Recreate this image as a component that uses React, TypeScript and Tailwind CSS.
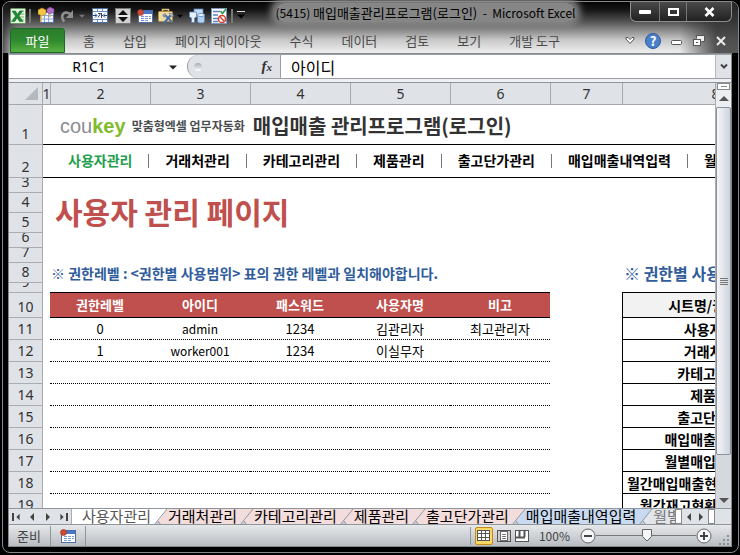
import type { ReactNode } from 'react'
import clsx from 'clsx'

const FONT = 'font-["Noto_Sans_CJK_KR","Noto_Sans",sans-serif]'
const LATIN = 'font-["Noto_Sans","Noto_Sans_CJK_KR",sans-serif]'

const RIBBON_TABS = ['홈', '삽입', '페이지 레이아웃', '수식', '데이터', '검토', '보기', '개발 도구']

const COLUMNS = [
  { label: '1', width: 'w-2' },
  { label: '2', width: 'w-[100px]' },
  { label: '3', width: 'w-[100px]' },
  { label: '4', width: 'w-[100px]' },
  { label: '5', width: 'w-[100px]' },
  { label: '6', width: 'w-[100px]' },
  { label: '7', width: 'w-[72px]' },
  { label: '8', width: 'w-[186px]' },
]

const ROWS = [
  { label: '1', height: 'h-10' },
  { label: '2', height: 'h-[33px]' },
  { label: '3', height: 'h-[15px]' },
  { label: '4', height: 'h-5' },
  { label: '5', height: 'h-5' },
  { label: '6', height: 'h-[15px]' },
  { label: '7', height: 'h-[15px]' },
  { label: '8', height: 'h-5' },
  { label: '9', height: 'h-[10px]' },
  { label: '10', height: 'h-[25px]' },
  { label: '11', height: 'h-[22px]' },
  { label: '12', height: 'h-[22px]' },
  { label: '13', height: 'h-[22px]' },
  { label: '14', height: 'h-[22px]' },
  { label: '15', height: 'h-[22px]' },
  { label: '16', height: 'h-[22px]' },
  { label: '17', height: 'h-[22px]' },
  { label: '18', height: 'h-[22px]' },
  { label: '19', height: 'h-[22px]' },
]

const NAV = ['사용자관리', '거래처관리', '카테고리관리', '제품관리', '출고단가관리', '매입매출내역입력', '월별매입매출']

const USER_HEADERS = ['권한레벨', '아이디', '패스워드', '사용자명', '비고']

const USERS = [
  ['0', 'admin', '1234', '김관리자', '최고관리자'],
  ['1', 'worker001', '1234', '이실무자', ''],
  ['', '', '', '', ''],
  ['', '', '', '', ''],
  ['', '', '', '', ''],
  ['', '', '', '', ''],
  ['', '', '', '', ''],
  ['', '', '', '', ''],
]

const SCOPES = [
  '사용자관리',
  '거래처관리',
  '카테고리관리',
  '제품관리',
  '출고단가관리',
  '매입매출내역입력',
  '월별매입매출집계',
  '월간매입매출현황(제품별집계)',
  '월간재고현황(제품별집계)',
]

const SHEET_TABS = [
  { label: '사용자관리', bg: 'bg-white', fill: '#ffffff', text: 'text-[#555]' },
  { label: '거래처관리', bg: 'bg-[#f3dcdc]', fill: '#f3dcdc', text: 'text-black' },
  { label: '카테고리관리', bg: 'bg-[#f3dcdc]', fill: '#f3dcdc', text: 'text-black' },
  { label: '제품관리', bg: 'bg-[#f3dcdc]', fill: '#f3dcdc', text: 'text-black' },
  { label: '출고단가관리', bg: 'bg-[#f3dcdc]', fill: '#f3dcdc', text: 'text-black' },
  { label: '매입매출내역입력', bg: 'bg-[#c9daf0]', fill: '#c9daf0', text: 'text-black' },
  { label: '월별매입매출', bg: 'bg-[#e2e5e9]', fill: '#e2e5e9', text: 'text-[#777]' },
]

function Triangle({ dir, className }: { dir: 'up' | 'down' | 'left' | 'right'; className?: string }) {
  const points = {
    up: '0,6 5,1 10,6',
    down: '0,2 10,2 5,7',
    left: '7,0 7,8 3,4',
    right: '3,0 3,8 7,4',
  }[dir]
  return (
    <svg width="10" height="8" viewBox="0 0 10 8" className={className}>
      <polygon points={points} fill="currentColor" />
    </svg>
  )
}

function QuickButton({ label, className, children }: { label: string; className?: string; children: ReactNode }) {
  return (
    <button type="button" aria-label={label} className={clsx('flex shrink-0 items-center justify-center', className)}>
      {children}
    </button>
  )
}

function ExcelIcon() {
  return (
    <svg width="16" height="16" viewBox="0 0 16 16">
      <rect x="0.5" y="0.5" width="15" height="15" rx="1" fill="#e9f2e4" stroke="#5f9a58" />
      <path d="M10 3h4M10 6h4M10 9h4M10 12h4" stroke="#7fb572" />
      <path d="M2 3h3.4l2 3.2L9.6 3h3L9 8l4 5.500H9.500L7.200 9.900 4.800 13.500H1.500L5.500 8z" fill="#1f8a35" stroke="#0e6a24" strokeWidth="0.5" />
    </svg>
  )
}

function BrushCalendarIcon() {
  return (
    <svg width="17" height="17" viewBox="0 0 17 17">
      <rect x="2.500" y="5.500" width="13" height="10" fill="#f4f7fd" stroke="#5273b5" />
      <path d="M3 8.500h12M3 12h12M6.500 6v9M10.500 6v9" stroke="#8ba5d8" />
      <path d="M4 1l4 2v4l-4 2-4-2V3z" fill="#f2c542" stroke="#b98514" strokeWidth="0.6" />
      <path d="M12 0l4 2v3l-4 2-3-2V2z" fill="#b46fc7" stroke="#7f3f97" strokeWidth="0.6" />
      <path d="M3 9v6M12 7v3" stroke="#e8b73a" strokeWidth="1.500" />
    </svg>
  )
}

function RedoIcon() {
  return (
    <svg width="14" height="14" viewBox="0 0 14 14" fill="none">
      <path d="M4.500 12.500C1 9.500 1.500 4 6 3.500c2-.2 3.500.8 5 2.500" stroke="#8d8f92" strokeWidth="2.600" />
      <path d="M13 1v8H5.800z" fill="#8d8f92" />
    </svg>
  )
}

function MergeIcon() {
  return (
    <svg width="16" height="15" viewBox="0 0 16 15" fill="none">
      <rect x="0.500" y="0.500" width="15" height="14" fill="#fff" stroke="#4c6fa9" />
      <path d="M1 3.500h14M1 11.500h14M5.500 1v2.500M10.500 1v2.500M5.500 11.500V14M10.500 11.500V14" stroke="#6c8cc0" />
      <path d="M1 7.500h3.500M3 5.500l2 2-2 2M15 7.500h-3M13 5.500l-2 2 2 2M6 5.500h2.500L6 9.500M9.500 5v5M9.500 7.500h1.500" stroke="#26456f" />
    </svg>
  )
}

function SpinIcon() {
  return (
    <svg width="16" height="16" viewBox="0 0 16 16">
      <rect x="0.500" y="0.500" width="15" height="15" fill="#d0d0d0" stroke="#777" />
      <path d="M8 2l5 5H3zM8 14L3 9h10z" fill="#111" />
      <path d="M1 8h14" stroke="#fff" />
    </svg>
  )
}

function FormIcon() {
  return (
    <svg width="16" height="14" viewBox="0 0 16 14">
      <rect x="1.500" y="1.500" width="14" height="12" fill="#fff" stroke="#4d6da8" />
      <rect x="2" y="2" width="13" height="3" fill="#4777c8" />
      <path d="M4 7.500h3M8 7.500h3M12 7.500h2M4 9.500h3M8 9.500h3M12 9.500h2M4 11.500h3M8 11.500h3" stroke="#7c9ad0" />
      <circle cx="3.500" cy="3.500" r="3" fill="#cf4a32" stroke="#96301f" strokeWidth="0.600" />
    </svg>
  )
}

function ToolboxIcon() {
  return (
    <svg width="17" height="16" viewBox="0 0 17 16" fill="none">
      <path d="M4.500 4V1.500h6V4" stroke="#e3c67c" strokeWidth="1.500" />
      <rect x="0.500" y="3.500" width="14" height="10" rx="1" fill="#f0dca2" stroke="#b48f3c" />
      <path d="M7 7l7.500 7.500" stroke="#5f7290" strokeWidth="2.200" />
      <path d="M12.500 7.500L6 15" stroke="#3c6db5" strokeWidth="2.200" />
      <path d="M4.500 8c0-2 2-3 3.500-2.500L6.500 7.500 8 9 6 9.500z" fill="#8391a8" />
      <path d="M11 5.500c2-1 4.500.5 4.500 3L13 8z" fill="#c2cad6" stroke="#5f6c80" strokeWidth="0.700" />
    </svg>
  )
}

function ShapesIcon() {
  return (
    <svg width="17" height="16" viewBox="0 0 17 16">
      <rect x="5" y="1" width="9" height="8" fill="#c3dbf4" stroke="#5684bd" strokeWidth="0.800" />
      <path d="M0.500 4h7v5l-2 1v4.500h-3V10l-2-1z" fill="#e4effa" stroke="#5684bd" strokeWidth="0.800" />
      <path d="M8.500 7v6.500c0 2 7 2 7 0V7z" fill="#b2d0f0" stroke="#5684bd" strokeWidth="0.800" />
      <ellipse cx="12" cy="7" rx="3.500" ry="1.500" fill="#f3f8fd" stroke="#5684bd" strokeWidth="0.800" />
    </svg>
  )
}

function CheckListIcon() {
  return (
    <svg width="16" height="16" viewBox="0 0 16 16" fill="none">
      <rect x="0.500" y="0.500" width="15" height="15" fill="#fff" stroke="#7f95bd" />
      <path d="M2 3.500h7M2 7h5M2 10.500h5M2 13.500h5" stroke="#5f80ba" strokeWidth="1.500" />
      <path d="M9.500 3l2 2.500L15 1" stroke="#2b9b45" strokeWidth="1.600" />
      <circle cx="11" cy="11" r="3.600" fill="#fff" stroke="#d6402c" strokeWidth="1.500" />
      <path d="M8.600 8.600l4.800 4.800" stroke="#d6402c" strokeWidth="1.400" />
    </svg>
  )
}

function TitleBar() {
  return (
    <header className="flex h-[26px] items-center pl-[7px]">
      <div className="flex shrink-0 items-center pt-px text-black">
        <QuickButton label="Excel" className="w-4">
          <ExcelIcon />
        </QuickButton>
        <span className="mx-[3px] h-3.5 w-0.5 bg-[#777]" />
        <QuickButton label="서식" className="w-6">
          <BrushCalendarIcon />
        </QuickButton>
        <QuickButton label="다시 실행" className="w-[18px]">
          <RedoIcon />
        </QuickButton>
        <QuickButton label="다시 실행 목록" className="w-3 text-[#777]">
          <Triangle dir="down" className="w-1.5" />
        </QuickButton>
        <QuickButton label="병합" className="w-6">
          <MergeIcon />
        </QuickButton>
        <QuickButton label="스핀" className="w-[22px]">
          <SpinIcon />
        </QuickButton>
        <QuickButton label="매크로 기록" className="w-[22px]">
          <FormIcon />
        </QuickButton>
        <QuickButton label="도구" className="w-5">
          <ToolboxIcon />
        </QuickButton>
        <QuickButton label="도구 목록" className="w-2">
          <Triangle dir="down" className="w-1.5" />
        </QuickButton>
        <QuickButton label="도형" className="w-[26px]">
          <ShapesIcon />
        </QuickButton>
        <QuickButton label="유효성 검사" className="w-[18px]">
          <CheckListIcon />
        </QuickButton>
        <span className="mr-1 ml-[3px] h-3.5 w-0.5 bg-[#777]" />
        <button type="button" aria-label="사용자 지정" className="flex flex-col items-center">
          <span className="h-px w-2 bg-[#ddd]" />
          <Triangle dir="down" className="w-2" />
        </button>
      </div>
      <h1 className="min-w-0 flex-1 pb-1 pl-2 text-center text-[13px] leading-5 whitespace-pre text-black">
        <span className="rounded-lg bg-[#868686] text-[13px] shadow-[0_0_7px_5px_#868686]">
          <span className="text-[12px]">(5415) </span>
          매입매출관리프로그램(로그인)
          <span className="text-[12px]">  -  Microsoft Excel</span>
        </span>
      </h1>
      <div className="mr-1.5 ml-8 flex h-5 shrink-0 self-start rounded-b-md border border-t-0 border-[#8e8e8e] bg-linear-to-b from-[#4a4a4a] to-[#222]">
        <button type="button" aria-label="최소화" className="flex w-7 items-center justify-center">
          <span className="h-1 w-3 rounded-[1px] bg-white" />
        </button>
        <button type="button" aria-label="최대화" className="flex w-7 items-center justify-center border-x border-[#777]">
          <span className="h-2 w-[11px] border-2 border-white" />
        </button>
        <button type="button" aria-label="닫기" className="flex w-11 items-center justify-center">
          <svg width="11" height="10" viewBox="0 0 11 10">
            <path d="M1.500 1l8 8M9.500 1l-8 8" stroke="#fff" strokeWidth="2.600" />
          </svg>
        </button>
      </div>
    </header>
  )
}

function Ribbon() {
  return (
    <div className="flex h-[25px] items-center pr-[11px] pl-[7px]">
      <button
        type="button"
        className="h-[25px] w-[55px] shrink-0 rounded-t-[3px] border border-[#1d6a24] bg-linear-to-b from-[#2c7d2c] via-[#2f8a2f] to-[#58b043] text-[13px] text-white"
      >
        파일
      </button>
      <nav className="flex flex-1 gap-7 pl-[18px] text-[13px] whitespace-nowrap text-[#4a4a4a]">
        {RIBBON_TABS.map((tab) => (
          <button key={tab} type="button">
            {tab}
          </button>
        ))}
      </nav>
      <div className="flex items-center gap-2.5">
        <button type="button" aria-label="리본 확장">
          <svg width="10" height="9" viewBox="0 0 10 9" fill="none">
            <path d="M1 1.500h2l2 2 2-2h2v1.500L5 7.500 1 3z" fill="#fff" stroke="#555" />
          </svg>
        </button>
        <button type="button" aria-label="도움말" className="h-4 w-4 rounded-full border border-[#2c5c9e] bg-[#4a80c9] text-[13px] leading-3.5 font-bold text-white">
          ?
        </button>
        <button type="button" aria-label="창 최소화">
          <svg width="11" height="10" viewBox="0 0 11 10">
            <rect x="0.500" y="4.500" width="10" height="4" rx="1" fill="#fff" stroke="#555" />
          </svg>
        </button>
        <button type="button" aria-label="창 복원">
          <svg width="13" height="12" viewBox="0 0 13 12" fill="none">
            <path d="M4.500 3.500v-3h8v6h-3" fill="#eee" stroke="#555" />
            <rect x="1.500" y="4.500" width="7" height="6" fill="#fff" stroke="#555" />
            <rect x="4" y="7" width="2" height="1" fill="#555" />
          </svg>
        </button>
        <button type="button" aria-label="창 닫기">
          <svg width="12" height="10" viewBox="0 0 12 10">
            <path d="M2 1l8 8M10 1L2 9" stroke="#555" strokeWidth="3.600" />
            <path d="M2 1l8 8M10 1L2 9" stroke="#eee" strokeWidth="1.800" />
          </svg>
        </button>
      </div>
    </div>
  )
}

function FormulaBar() {
  return (
    <div className="flex h-6 items-stretch border-b border-[#9a9ea4] bg-[#dfe2e7]">
      <div className="flex w-[178px] shrink-0 items-center bg-white">
        <input
          aria-label="이름 상자"
          defaultValue="R1C1"
          className={clsx('w-40 bg-transparent text-center text-[14px] text-black outline-none', LATIN)}
        />
        <button type="button" aria-label="이름 목록" className="text-[#222]">
          <Triangle dir="down" className="w-2" />
        </button>
      </div>
      <div className="flex w-[93px] shrink-0 items-center justify-between bg-white">
        <div className="flex h-full w-full items-center justify-between rounded-l-full border-l border-[#9a9ea4] bg-[#dfe2e7] pr-2 pl-1.5">
          <span className="h-2 w-2 rounded-full bg-linear-to-b from-[#a9adb3] to-white" />
          <button type="button" aria-label="함수 삽입" className="font-['Liberation_Serif',serif] text-[15px] leading-5 font-bold text-[#333] italic">
            f<span className="text-[11px]">x</span>
          </button>
        </div>
      </div>
      <input
        aria-label="수식 입력줄"
        defaultValue="아이디"
        className="min-w-0 flex-1 border-l border-[#9a9ea4] bg-white pl-2.5 text-[16px] text-black outline-none"
      />
      <button type="button" aria-label="수식 입력줄 확장" className="flex w-4 items-center justify-center border-l border-[#b5b9bf]">
        <svg width="8" height="7" viewBox="0 0 8 7" fill="none">
          <path d="M1 1.500l3 3 3-3" stroke="#444" strokeWidth="2" />
        </svg>
      </button>
    </div>
  )
}

function ColumnHeaders() {
  return (
    <div className={clsx('flex h-[22px] shrink-0 border-b border-[#a3a7ad] bg-[#dfe2e7] text-[14px] text-[#333]', LATIN)}>
      <div className="flex w-[34px] shrink-0 items-end justify-end border-r border-[#a9adb3] pr-1 pb-1">
        <svg width="13" height="13" viewBox="0 0 13 13">
          <path d="M13 0v13H0z" fill="#b5bac0" />
        </svg>
      </div>
      {COLUMNS.map((col) => (
        <div key={col.label} className={clsx('flex shrink-0 items-center justify-center border-r border-[#a9adb3]', col.width)}>
          {col.label}
        </div>
      ))}
    </div>
  )
}

function RowHeaders() {
  return (
    <div className={clsx('w-[34px] shrink-0 overflow-hidden border-r border-[#a9adb3] bg-[#dfe2e7] text-[14px] leading-[21px] text-[#333]', LATIN)}>
      {ROWS.map((row) => (
        <div key={row.label} className={clsx('flex items-end justify-center overflow-hidden border-b border-[#a9adb3]', row.height)}>
          {row.label}
        </div>
      ))}
    </div>
  )
}

function Logo() {
  return (
    <div className="flex items-center gap-1.5">
      <span className="font-['Liberation_Sans',sans-serif] text-[20px] leading-6 text-[#8a8d90]">
        cou<span className="font-bold text-[#80bb2a]">key</span>
      </span>
      <span className="text-[12px] font-bold text-[#4a4d50]">맞춤형엑셀 업무자동화</span>
    </div>
  )
}

function UserTable() {
  return (
    <table className="w-[500px] shrink-0 table-fixed border-separate border-spacing-0 text-center text-[13px] leading-5">
      <thead>
        <tr>
          {USER_HEADERS.map((head) => (
            <th key={head} className="h-[26px] border-y border-black bg-[#c0504d] p-0 font-bold text-white">
              {head}
            </th>
          ))}
        </tr>
      </thead>
      <tbody>
        {USERS.map((user, i) => (
          <tr key={i}>
            {user.map((value, j) => (
              <td key={j} className={clsx('h-[22px] border-b border-dotted border-black p-0', j === 1 && 'text-[12px]')}>
                {value}
              </td>
            ))}
          </tr>
        ))}
      </tbody>
    </table>
  )
}

function ScopeTable() {
  return (
    <table className="w-[187px] shrink-0 table-fixed border-separate border-spacing-0 border-l border-black text-center text-[14px] leading-5 font-bold whitespace-nowrap">
      <thead>
        <tr>
          <th className="h-[26px] border-y border-black bg-[#f2f2f2] p-0">시트명/권한레벨</th>
        </tr>
      </thead>
      <tbody>
        {SCOPES.map((scope) => (
          <tr key={scope}>
            <td className="h-[22px] border-b border-black p-0">{scope}</td>
          </tr>
        ))}
      </tbody>
    </table>
  )
}

function Sheet() {
  return (
    <main className="min-w-0 flex-1 overflow-hidden bg-white text-black">
      <div className="flex h-10 items-center gap-2 border-b border-black pt-0.5 pl-[17px] whitespace-nowrap">
        <Logo />
        <h2 className="text-[20px] leading-7 font-bold text-[#333]">매입매출 관리프로그램(로그인)</h2>
      </div>
      <nav className="flex h-[33px] items-center border-b border-black pb-px pl-[9px] text-[14px] font-bold whitespace-nowrap">
        {NAV.map((item, i) => (
          <div key={item} className="flex shrink-0 items-center">
            {i > 0 && <span className="h-3.5 w-px bg-[#777]" />}
            <a href="#" className={clsx('px-4', i === 0 && 'text-[#1fa04d]')}>
              {item}
            </a>
          </div>
        ))}
      </nav>
      <h3 className="mt-[15px] h-10 pl-3 text-[30px] leading-9 font-bold whitespace-nowrap text-[#c0504d]">
        사용자 관리 페이지
      </h3>
      <div className="mt-[30px] flex h-5 pl-2 leading-5 font-bold whitespace-nowrap text-[#2f5c9b]">
        <p className="w-[573px] shrink-0 text-[14px]">※ 권한레벨 : &lt;권한별 사용범위&gt; 표의 권한 레벨과 일치해야합니다.</p>
        <p className="shrink-0 text-[16px]">※ 권한별 사용범위</p>
      </div>
      <div className="mt-[9px] flex items-start gap-[72px] pl-[7px]">
        <UserTable />
        <ScopeTable />
      </div>
    </main>
  )
}

function VerticalScrollbar() {
  return (
    <div className="flex w-4 shrink-0 flex-col items-stretch border-l border-[#a9adb3] bg-[#d5d9de] text-[#555]">
      <div className="mx-px flex h-[7px] items-center justify-center border border-[#888] bg-white">
        <span className="h-px w-1.5 bg-[#888]" />
      </div>
      <button type="button" aria-label="위로" className="flex h-[17px] items-center justify-center bg-[#eceef1]">
        <Triangle dir="up" />
      </button>
      <div className="flex basis-[348px] flex-col items-center justify-center gap-px rounded-[2px] border border-[#8b93a0] bg-linear-to-r from-[#f4f5f7] to-[#cfd4dc]">
        <span className="h-px w-2 bg-[#777]" />
        <span className="h-px w-2 bg-[#777]" />
        <span className="h-px w-2 bg-[#777]" />
        <span className="h-px w-2 bg-[#777]" />
      </div>
      <div className="flex-1" />
      <button type="button" aria-label="아래로" className="flex h-4 items-center justify-center">
        <Triangle dir="down" />
      </button>
    </div>
  )
}

function TabEdge({ left, right }: { left: string; right: string }) {
  return (
    <svg width="17" height="16" viewBox="0 0 17 16" className="shrink-0">
      <rect width="17" height="16" fill={left} />
      <path d="M4 16L16 0h1v16z" fill={right} />
      <path d="M3 16l4-4 3 4z" fill="#c5cbd3" />
      <path d="M3 16L16 0M7 12l3 4" stroke="#9299a3" fill="none" />
    </svg>
  )
}

function SheetTabs() {
  return (
    <div className="flex h-[17px] shrink-0 items-stretch border-y border-[#8f959d] bg-[#dfe2e7] text-[#444]">
      <div className="flex w-[63px] shrink-0 items-center justify-around border-r border-[#a9adb3]">
        <button type="button" aria-label="첫 시트" className="flex items-center">
          <span className="h-2 w-0.5 bg-[#444]" />
          <Triangle dir="left" className="w-2" />
        </button>
        <button type="button" aria-label="이전 시트">
          <Triangle dir="left" />
        </button>
        <button type="button" aria-label="다음 시트">
          <Triangle dir="right" />
        </button>
        <button type="button" aria-label="마지막 시트" className="flex items-center">
          <Triangle dir="right" className="w-2" />
          <span className="h-2 w-0.5 bg-[#444]" />
        </button>
      </div>
      <div className="flex min-w-0 flex-1 overflow-hidden text-[15px] leading-[13px] whitespace-nowrap">
        {SHEET_TABS.map((tab, i) => (
          <div key={tab.label} className="flex shrink-0">
            {i > 0 && <TabEdge left={SHEET_TABS[i - 1].fill} right={tab.fill} />}
            <button type="button" className={clsx('pb-0.5', tab.bg, tab.text, i === 0 && 'pl-2.5')}>
              {tab.label}
            </button>
          </div>
        ))}
      </div>
      <div className="flex w-10 shrink-0 items-stretch justify-between">
        <span className="w-[7px] border border-[#888] bg-white" />
        <button type="button" aria-label="왼쪽으로">
          <Triangle dir="left" />
        </button>
        <button type="button" aria-label="오른쪽으로">
          <Triangle dir="right" />
        </button>
        <span className="w-[7px] border border-[#888] bg-white" />
      </div>
      <div className="w-4 shrink-0" />
    </div>
  )
}

function StatusBar() {
  return (
    <footer className="flex h-[21px] shrink-0 items-center bg-linear-to-b from-[#e6e8ea] to-[#b9bdc2] text-[13px] text-[#444]">
      <span className="w-[42px] shrink-0 border-r border-[#8f959d] pl-2 leading-5">준비</span>
      <button type="button" aria-label="매크로 기록" className="flex h-5 w-[35px] items-center justify-center border-r border-[#8f959d]">
        <FormIcon />
      </button>
      <div className="flex-1" />
      <div className="flex items-center gap-1 border-l border-[#8f959d] pl-1">
        <button type="button" aria-label="기본 보기" className="flex h-[18px] w-[18px] items-center justify-center rounded-[2px] border border-[#c08a1c] bg-[#fbd766]">
          <svg width="13" height="11" viewBox="0 0 13 11">
            <rect x="0.500" y="0.500" width="12" height="10" fill="#fff" stroke="#555" />
            <path d="M1 3.500h11M1 7.500h11M4.500 1v9M8.500 1v9" stroke="#555" />
          </svg>
        </button>
        <button type="button" aria-label="페이지 레이아웃 보기">
          <svg width="14" height="12" viewBox="0 0 14 12">
            <rect x="0.500" y="0.500" width="13" height="11" fill="#ccc" stroke="#555" />
            <rect x="3.500" y="1.500" width="7" height="9" fill="#fff" stroke="#666" />
            <path d="M5 4.500h4M5 6.500h4M5 8.500h4" stroke="#777" />
          </svg>
        </button>
        <button type="button" aria-label="페이지 나누기 미리 보기">
          <svg width="14" height="12" viewBox="0 0 14 12">
            <rect x="0.500" y="0.500" width="13" height="11" fill="#fff" stroke="#555" />
            <path d="M4.500 1v6M9.500 1v6M1 7.500h9" stroke="#555" strokeWidth="2" />
          </svg>
        </button>
      </div>
      <span className="px-2.5 text-[12px] leading-5">100%</span>
      <button type="button" aria-label="축소">
        <svg width="16" height="16" viewBox="0 0 16 16">
          <circle cx="8" cy="8" r="7" fill="#f5f6f7" stroke="#666" />
          <path d="M4 8h8" stroke="#444" strokeWidth="2" />
        </svg>
      </button>
      <label className="relative flex h-4 w-[100px] items-center">
        <span className="h-px w-full bg-[#777]" />
        <input type="range" aria-label="확대/축소" min={10} max={190} defaultValue={100} className="absolute inset-0 w-full opacity-0" />
        <svg width="10" height="13" viewBox="0 0 10 13" className="absolute left-[46px]">
          <path d="M0.500 0.500h9v7L5 12 0.500 7.500z" fill="#f5f6f7" stroke="#666" />
        </svg>
      </label>
      <button type="button" aria-label="확대">
        <svg width="16" height="16" viewBox="0 0 16 16">
          <circle cx="8" cy="8" r="7" fill="#f5f6f7" stroke="#666" />
          <path d="M4 8h8M8 4v8" stroke="#444" strokeWidth="2" />
        </svg>
      </button>
      <svg width="12" height="12" viewBox="0 0 12 12" className="mr-px ml-1.5 self-end">
        <path d="M9 1h2v2H9zM9 5h2v2H9zM5 5h2v2H5zM9 9h2v2H9zM5 9h2v2H5zM1 9h2v2H1z" fill="#8b9097" />
      </svg>
    </footer>
  )
}

export default function App() {
  return (
    <div className={clsx('flex h-screen flex-col bg-black pt-px pr-px pb-0.5 pl-0.5', FONT)}>
      <div className="flex min-h-0 flex-1 flex-col rounded-lg border border-[#85888c] bg-black">
        <div className="rounded-t-lg bg-[linear-gradient(to_right,#222b_0,transparent_2%,transparent_92%,#303030cc_97%),linear-gradient(to_bottom,#050505_0,#161616_8px,#555_20px,#8a8a8a_28px,#c8c8c8_38px,#ececec_50px)]">
          <TitleBar />
          <Ribbon />
        </div>
        <div className="mr-1.5 mb-[5px] ml-[5px] flex min-h-0 flex-1 flex-col border border-[#85888c] bg-[#eef0f4]">
          <div className="h-px shrink-0 bg-[#9aa1aa]" />
          <FormulaBar />
          <div className="h-1 shrink-0 border-b border-[#8f959d]" />
          <div className="flex min-h-0 flex-1">
            <div className="flex min-w-0 flex-1 flex-col overflow-hidden">
              <ColumnHeaders />
              <div className="flex min-h-0 flex-1">
                <RowHeaders />
                <Sheet />
              </div>
            </div>
            <VerticalScrollbar />
          </div>
          <SheetTabs />
          <StatusBar />
        </div>
      </div>
    </div>
  )
}
